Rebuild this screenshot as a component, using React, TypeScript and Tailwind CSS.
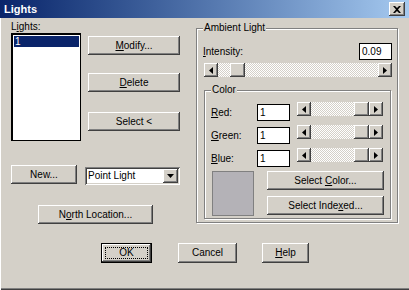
import React from "react";

const raised =
  "bg-[#d4d0c8] shadow-[inset_-1px_-1px_#404040,inset_1px_1px_#ffffff,inset_-2px_-2px_#808080,inset_2px_2px_#d4d0c8]";
const sunken =
  "shadow-[inset_1px_1px_#808080,inset_-1px_-1px_#ffffff,inset_2px_2px_#404040,inset_-2px_-2px_#d4d0c8]";
const checker =
  "bg-[image:repeating-conic-gradient(#d4d0c8_0_25%,#ffffff_0_50%)] bg-[length:2px_2px]";

const Btn = ({ className, children }: { className?: string; children: React.ReactNode }) => (
  <div className={`${raised} flex items-center justify-center leading-none ${className ?? ""}`}>
    {children}
  </div>
);

const Arrow = ({ dir }: { dir: "left" | "right" | "down" }) => {
  if (dir === "down")
    return (
      <svg width="7" height="4" viewBox="0 0 7 4">
        <polygon points="0,0 7,0 3.5,4" fill="#000" />
      </svg>
    );
  return (
    <svg width="4" height="7" viewBox="0 0 4 7">
      <polygon points={dir === "left" ? "4,0 4,7 0,3.5" : "0,0 0,7 4,3.5"} fill="#000" />
    </svg>
  );
};

const ScrollBar = ({ thumb, className }: { thumb: number; className?: string }) => (
  <div className={`flex h-[14px] ${className ?? ""}`}>
    <Btn className="w-[14px] h-[14px] shrink-0">
      <Arrow dir="left" />
    </Btn>
    <div className={`flex-1 flex ${checker}`}>
      <div style={{ marginLeft: thumb }} className={`${raised} w-[15px] h-[14px]`} />
    </div>
    <Btn className="w-[14px] h-[14px] shrink-0">
      <Arrow dir="right" />
    </Btn>
  </div>
);

const Edit = ({ value }: { value: string }) => (
  <div className="w-[33px] h-[17px] bg-white border border-black pl-[2px] flex items-center leading-none">
    {value}
  </div>
);

const Group = ({
  label,
  className,
  children,
}: {
  label: React.ReactNode;
  className?: string;
  children: React.ReactNode;
}) => (
  <div
    className={`relative border border-[#808080] shadow-[1px_1px_0_#ffffff,inset_1px_1px_0_#ffffff] ${className ?? ""}`}
  >
    <span className="absolute left-[6px] top-[-7px] px-[1px] bg-[#d4d0c8] leading-[12px]">
      {label}
    </span>
    {children}
  </div>
);

const ColorRow = ({ label, ul }: { label: string; ul: string }) => (
  <div className="flex items-start h-[23px]">
    <div className="flex items-center mt-[2px]">
      <span className="w-[46px]">
        <u>{ul}</u>
        {label}
      </span>
      <Edit value="1" />
    </div>
    <ScrollBar thumb={43} className="ml-[7px] w-[85px]" />
  </div>
);

export default function App() {
  return (
    <div className="w-[409px] h-[290px] bg-[#d4d0c8] flex flex-col overflow-hidden text-[10px] text-black font-['Liberation_Sans',Arial,sans-serif] shadow-[inset_1px_0_#ffffff,inset_0_-1px_#404040,inset_0_-2px_#808080]">
      {/* Title bar */}
      <div className="h-[18px] shrink-0 bg-linear-to-r from-[#0a246a] to-[#a6caf0] flex items-center justify-between pl-[4px] pr-[4px]">
        <span className="text-white font-bold text-[11px] leading-none">Lights</span>
        <Btn className="w-[16px] h-[14px]">
          <svg width="8" height="7" viewBox="0 0 8 7">
            <path d="M0 0 L2 0 L4 2 L6 0 L8 0 L5 3.5 L8 7 L6 7 L4 5 L2 7 L0 7 L3 3.5 Z" fill="#000" />
          </svg>
        </Btn>
      </div>

      <div className="flex">
        {/* Left column */}
        <div className="w-[196px] shrink-0 pl-[11px] flex flex-col">
          <span className="mt-[3px] h-[12px] leading-[12px]">
            L<u>i</u>ghts:
          </span>
          <div className="flex items-start">
            <div className="w-[70px] h-[108px] bg-white border border-black border-t-2 border-l-2 p-[1px]">
              <div className="bg-[#0a246a] text-white h-[11px] leading-[11px] pl-[1px]">1</div>
            </div>
            <div className="ml-[7px] w-[92px] flex flex-col">
              <Btn className="mt-[3px] h-[19px]">
                <span>
                  <u>M</u>odify...
                </span>
              </Btn>
              <Btn className="mt-[18px] h-[19px]">
                <span>
                  <u>D</u>elete
                </span>
              </Btn>
              <Btn className="mt-[20px] h-[19px]">Select &lt;</Btn>
            </div>
          </div>
          <div className="flex items-start mt-[24px]">
            <Btn className="w-[66px] h-[19px]">New...</Btn>
            <div className={`ml-[8px] mt-[2px] w-[95px] h-[18px] bg-white ${sunken} flex items-center justify-between pl-[3px] pr-[2px]`}>
              <span className="leading-none">Point Light</span>
              <Btn className="w-[15px] h-[14px]">
                <Arrow dir="down" />
              </Btn>
            </div>
          </div>
          <Btn className="mt-[20px] ml-[27px] w-[115px] h-[19px]">
            <span>
              N<u>o</u>rth Location...
            </span>
          </Btn>
        </div>

        {/* Ambient Light */}
        <Group label="Ambient Light" className="mt-[10px] w-[202px] h-[195px] flex flex-col pl-[6px] pr-[5px] pt-[14px]">
          <div className="flex items-center justify-between h-[17px]">
            <span>
              <u>I</u>ntensity:
            </span>
            <Edit value="0.09" />
          </div>
          <ScrollBar thumb={12} className="mt-[3px] ml-[1px]" />
          <Group label="Color" className="mt-[13px] ml-[1px] mr-[1px] h-[129px] flex flex-col pl-[6px] pt-[11px]">
            <ColorRow ul="R" label="ed:" />
            <ColorRow ul="G" label="reen:" />
            <ColorRow ul="B" label="lue:" />
            <div className="flex items-start">
              <div className="ml-[1px] w-[42px] h-[45px] bg-[#b4b2b7] border border-[#808080]" />
              <div className="ml-[13px] w-[117px] flex flex-col">
                <Btn className="h-[19px]">
                  <span>
                    Select <u>C</u>olor...
                  </span>
                </Btn>
                <Btn className="mt-[6px] h-[19px]">
                  <span>
                    Select Inde<u>x</u>ed...
                  </span>
                </Btn>
              </div>
            </div>
          </Group>
        </Group>
      </div>

      {/* Bottom buttons */}
      <div className="flex mt-[19px] pl-[101px]">
        <div className="w-[51px] h-[20px] border border-black">
          <div className={`${raised} w-full h-full p-[3px]`}>
            <div className="w-full h-full border border-dotted border-black flex items-center justify-center leading-none">
              OK
            </div>
          </div>
        </div>
        <Btn className="ml-[26px] w-[59px] h-[20px]">Cancel</Btn>
        <Btn className="ml-[25px] w-[47px] h-[20px]">
          <span>
            <u>H</u>elp
          </span>
        </Btn>
      </div>
    </div>
  );
}
